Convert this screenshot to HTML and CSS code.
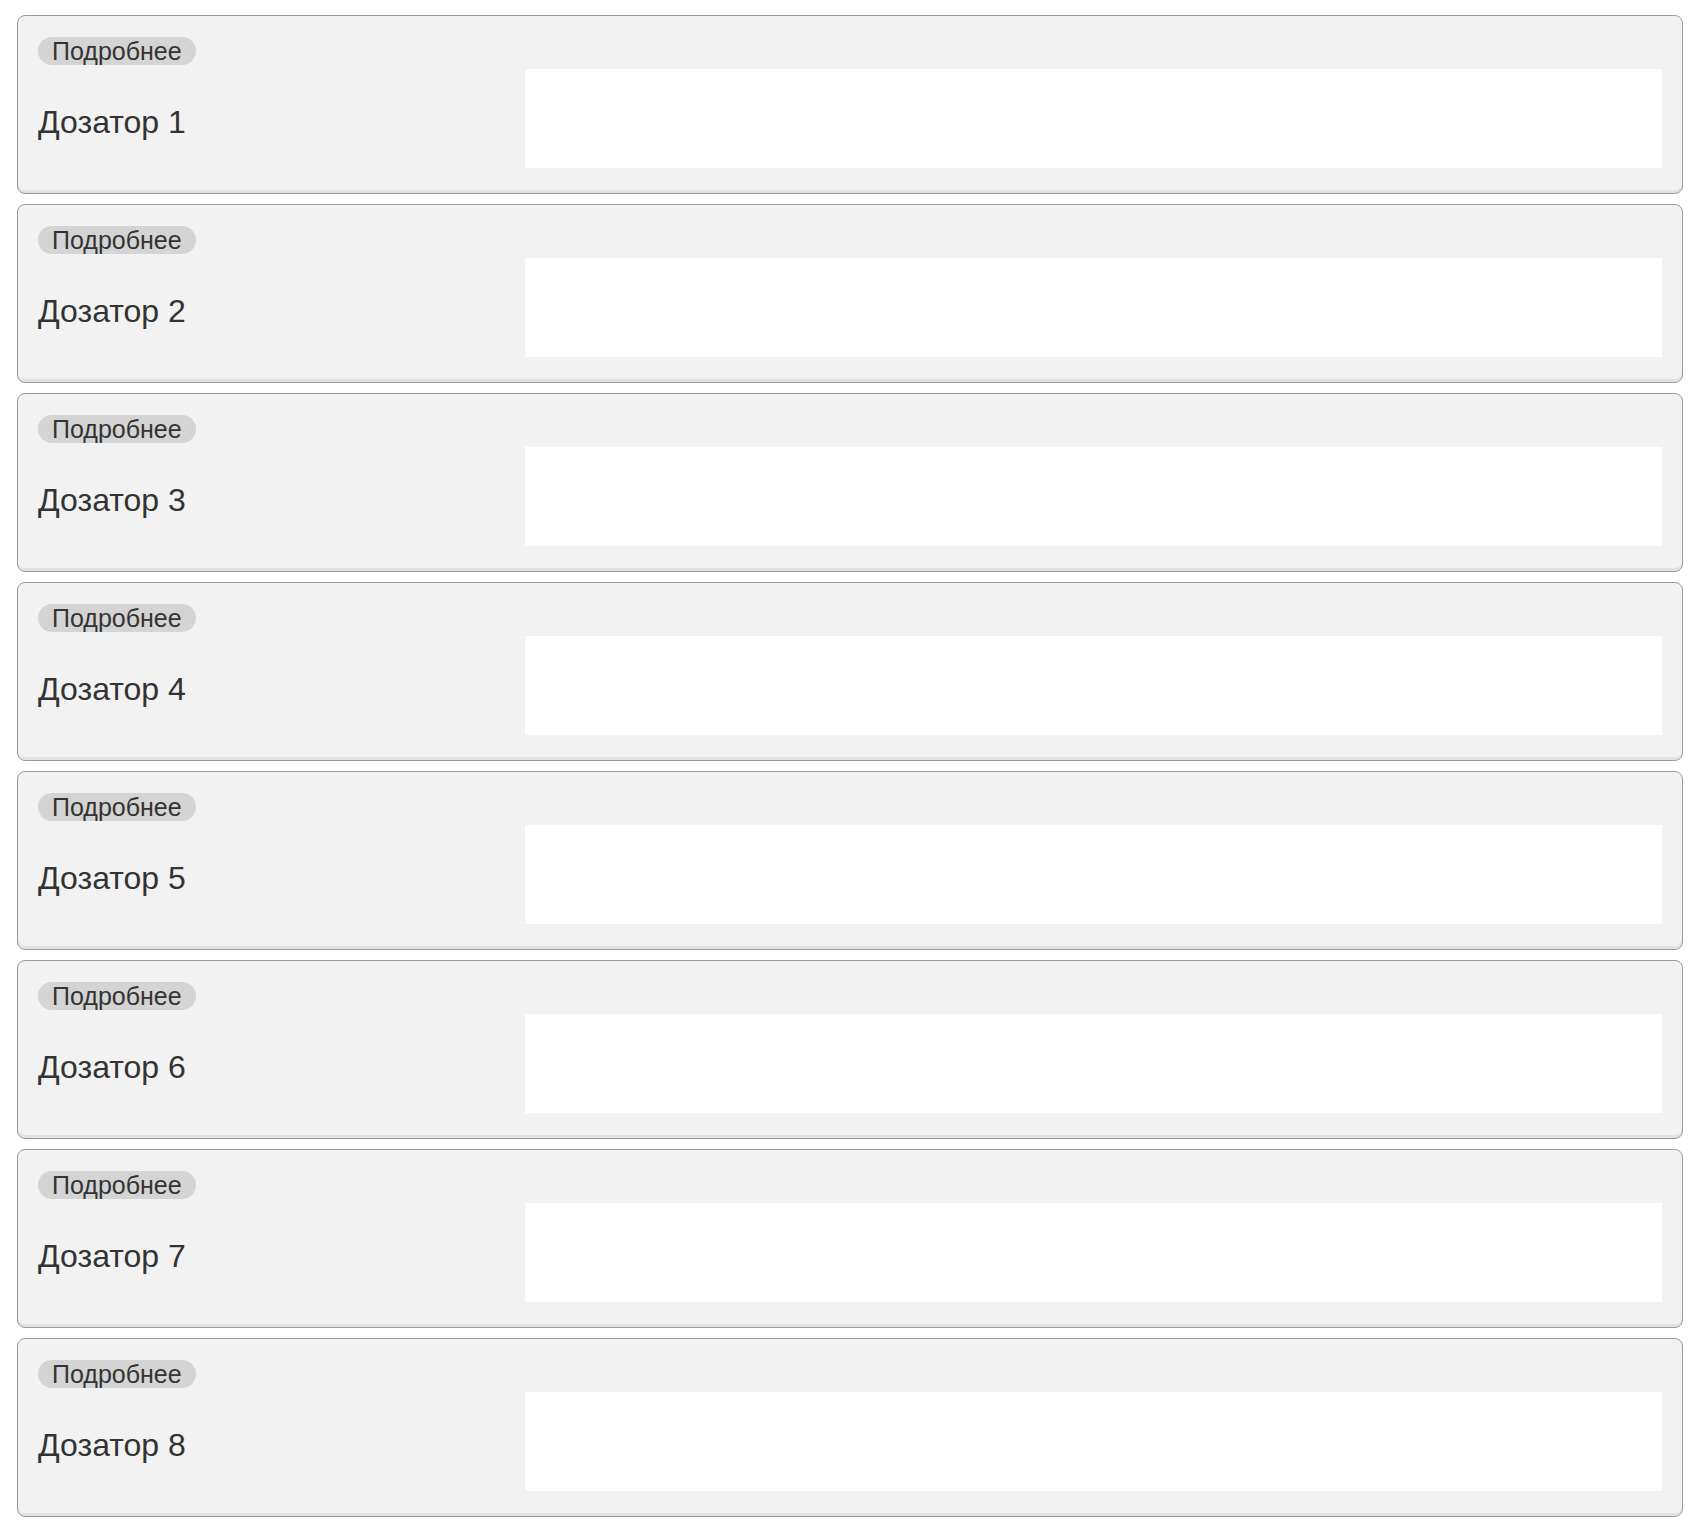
FILE: index.html
```html
<!DOCTYPE html>
<html lang="ru">
<head>
<meta charset="utf-8">
<title>Дозаторы</title>
<link rel="stylesheet" href="styles.css">
</head>
<body>
<div class="list">
  <div class="card">
    <span class="badge">Подробнее</span>
    <div class="row"><div class="title">Дозатор 1</div><div class="panel"></div></div>
  </div>
  <div class="card">
    <span class="badge">Подробнее</span>
    <div class="row"><div class="title">Дозатор 2</div><div class="panel"></div></div>
  </div>
  <div class="card">
    <span class="badge">Подробнее</span>
    <div class="row"><div class="title">Дозатор 3</div><div class="panel"></div></div>
  </div>
  <div class="card">
    <span class="badge">Подробнее</span>
    <div class="row"><div class="title">Дозатор 4</div><div class="panel"></div></div>
  </div>
  <div class="card">
    <span class="badge">Подробнее</span>
    <div class="row"><div class="title">Дозатор 5</div><div class="panel"></div></div>
  </div>
  <div class="card">
    <span class="badge">Подробнее</span>
    <div class="row"><div class="title">Дозатор 6</div><div class="panel"></div></div>
  </div>
  <div class="card">
    <span class="badge">Подробнее</span>
    <div class="row"><div class="title">Дозатор 7</div><div class="panel"></div></div>
  </div>
  <div class="card">
    <span class="badge">Подробнее</span>
    <div class="row"><div class="title">Дозатор 8</div><div class="panel"></div></div>
  </div>
</div>
</body>
</html>
```
FILE: styles.css
```css
body {
  margin: 8px;
  background: #ffffff;
  font-family: "Liberation Sans", Arial, sans-serif;
  color: #333333;
}
.list {
  padding: 7px 1px 0 9px;
  display: flex;
  flex-direction: column;
  gap: 10px;
}
.card {
  border: 1px solid #9a9a9a;
  border-radius: 8px;
  background: #f2f2f2;
  box-shadow: inset 0 -3px 0 #e2e2e2;
  padding: 21px 20px 25px 20px;
  display: flex;
  flex-direction: column;
  align-items: flex-start;
  gap: 4px;
}
.badge {
  display: inline-block;
  background: #d4d4d4;
  border-radius: 14px;
  padding: 0 14px;
  height: 28px;
  line-height: 28px;
  font-size: 25px;
  color: #333333;
}
.row {
  display: flex;
  width: 100%;
  align-items: flex-start;
}
.title {
  flex: 0 0 30%;
  font-size: 32px;
  line-height: 37px;
  margin-top: 35px;
  color: #333333;
}
.panel {
  flex: 0 0 70%;
  height: 99px;
  background: #ffffff;
}
```
